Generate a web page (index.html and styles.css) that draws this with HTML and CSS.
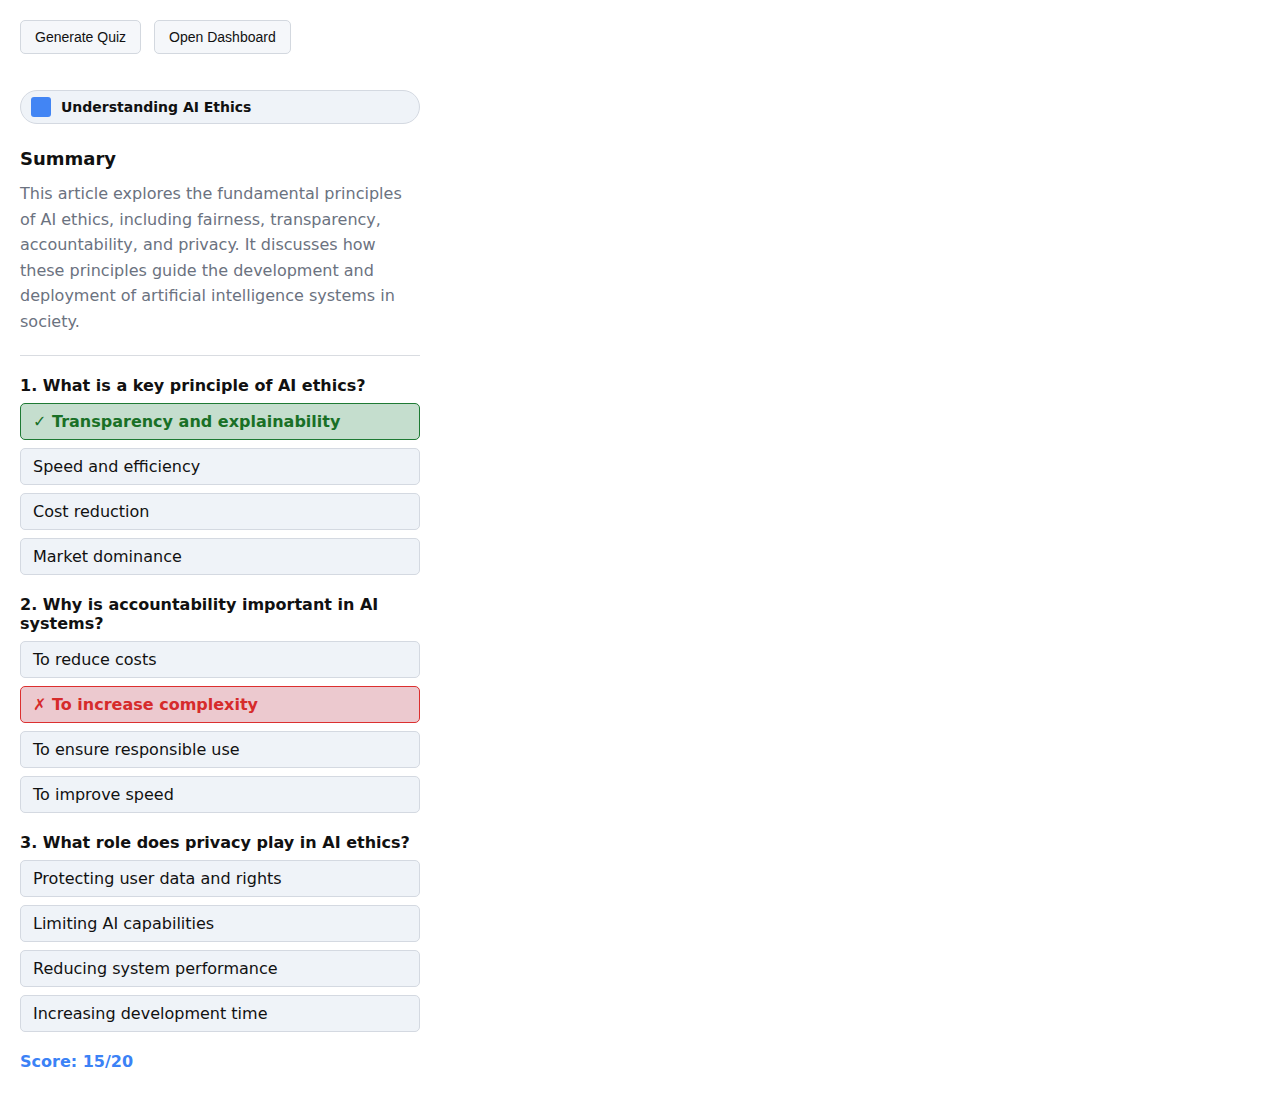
FILE: index.html
```html
<!DOCTYPE html>
<html>
<head>
<meta charset="utf-8">
<link rel="stylesheet" href="styles.css">
</head>
<body>
<div class="page">
  <div class="toolbar">
    <button class="btn">Generate Quiz</button>
    <button class="btn">Open Dashboard</button>
  </div>
  <div class="panel">
    <div class="pill"><span class="dot"></span><span class="pill-title">Understanding AI Ethics</span></div>
    <h2 class="summary-title">Summary</h2>
    <p class="summary">This article explores the fundamental principles of AI ethics, including fairness, transparency, accountability, and privacy. It discusses how these principles guide the development and deployment of artificial intelligence systems in society.</p>
    <hr class="divider">
    <div class="question">
      <h3 class="q-title">1. What is a key principle of AI ethics?</h3>
      <div class="opt correct">✓ Transparency and explainability</div>
      <div class="opt">Speed and efficiency</div>
      <div class="opt">Cost reduction</div>
      <div class="opt">Market dominance</div>
    </div>
    <div class="question">
      <h3 class="q-title">2. Why is accountability important in AI systems?</h3>
      <div class="opt">To reduce costs</div>
      <div class="opt wrong">✗ To increase complexity</div>
      <div class="opt">To ensure responsible use</div>
      <div class="opt">To improve speed</div>
    </div>
    <div class="question">
      <h3 class="q-title">3. What role does privacy play in AI ethics?</h3>
      <div class="opt">Protecting user data and rights</div>
      <div class="opt">Limiting AI capabilities</div>
      <div class="opt">Reducing system performance</div>
      <div class="opt">Increasing development time</div>
    </div>
    <div class="score">Score: 15/20</div>
  </div>
</div>
</body>
</html>
```
FILE: styles.css
```css
* { box-sizing: border-box; }
body {
  margin: 0;
  background: #ffffff;
  font-family: "DejaVu Sans", sans-serif;
  color: #111111;
}
.page {
  padding: 20px;
}
.toolbar {
  display: flex;
  gap: 13px;
  margin-bottom: 36px;
}
.btn {
  font-family: "Liberation Sans", Arial, sans-serif;
  font-size: 14px;
  color: #111111;
  height: 34px;
  padding: 0 14px;
  background: #f5f7fa;
  border: 1px solid #d3d8df;
  border-radius: 5px;
}
.panel {
  width: 400px;
}
.pill {
  display: flex;
  align-items: center;
  height: 34px;
  padding: 0 10px;
  background: #eff3f8;
  border: 1px solid #d4d9e1;
  border-radius: 17px;
}
.dot {
  width: 20px;
  height: 20px;
  border-radius: 3px;
  background: #4285f4;
  margin-right: 10px;
}
.pill-title {
  font-size: 14px;
  font-weight: bold;
  color: #111111;
}
.summary-title {
  font-size: 18px;
  font-weight: bold;
  margin: 24px 0 11px;
  line-height: 22px;
}
.summary {
  margin: 0;
  font-size: 16px;
  line-height: 25.6px;
  color: #6b7280;
}
.divider {
  border: 0;
  border-top: 1px solid #d9dce1;
  margin: 20px 0 20px;
}
.question {
  display: flex;
  flex-direction: column;
  gap: 8px;
  margin-bottom: 20px;
}
.q-title {
  font-size: 16px;
  font-weight: bold;
  line-height: 19px;
  margin: 0;
}
.opt {
  height: 37px;
  display: flex;
  align-items: center;
  padding: 0 12px;
  font-size: 16px;
  background: #eff3f8;
  border: 1px solid #d4d9e1;
  border-radius: 5px;
  color: #111111;
}
.opt.correct {
  background: #c5dece;
  border-color: #1e7a34;
  color: #197026;
  font-weight: bold;
}
.opt.wrong {
  background: #ecc9cf;
  border-color: #dc2f2f;
  color: #d62b2b;
  font-weight: bold;
}
.score {
  margin-top: 0;
  font-size: 16px;
  font-weight: bold;
  color: #3b82f6;
}
```
